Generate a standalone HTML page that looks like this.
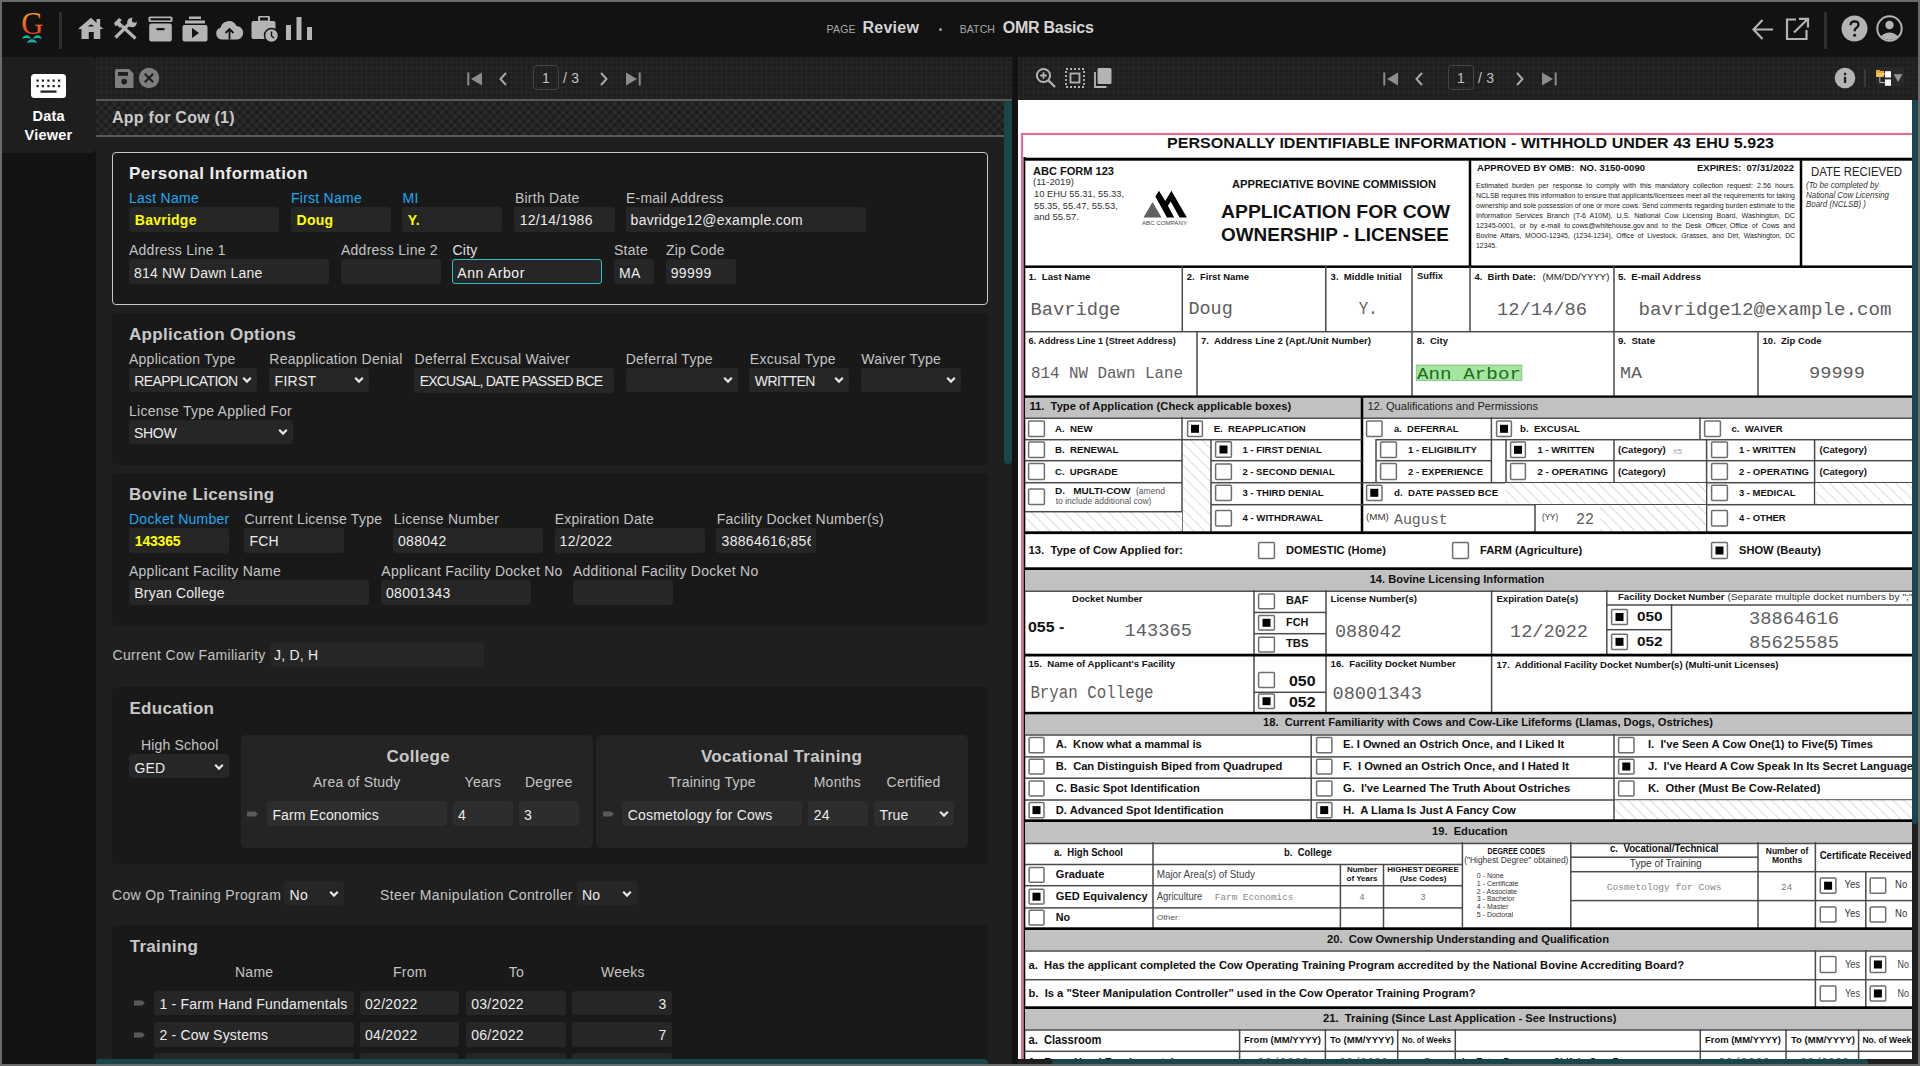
<!DOCTYPE html>
<html><head><meta charset="utf-8">
<style>
*{box-sizing:border-box;margin:0;padding:0}
html,body{width:1920px;height:1066px;overflow:hidden;background:#6b6b6b;font-family:"Liberation Sans",sans-serif}
.a{position:absolute}
.t{position:absolute;white-space:nowrap;letter-spacing:0.25px}
svg text{white-space:pre}
.grid{background-color:#1f1f1f;background-image:linear-gradient(rgba(255,255,255,0.028) 1px,transparent 1px),linear-gradient(90deg,rgba(255,255,255,0.028) 1px,transparent 1px);background-size:5px 5px}
.chk{background-color:#2c2c2c;background-image:repeating-linear-gradient(45deg,rgba(0,0,0,0.2) 0 3px,transparent 3px 6.1px),repeating-linear-gradient(-45deg,rgba(0,0,0,0.2) 0 3px,transparent 3px 6.1px)}
</style></head>
<body>

<div class="a" style="left:2px;top:2px;width:1916px;height:1062px;background:#121212;"></div>
<svg class="a" style="left:18px;top:10px" width="32" height="36" viewBox="0 0 32 36">
<defs><linearGradient id="lg" x1="0" y1="0" x2="0" y2="1"><stop offset="0.15" stop-color="#f5a01c"/><stop offset="0.95" stop-color="#e82a1e"/></linearGradient></defs>
<text x="14.3" y="24" text-anchor="middle" font-family="Liberation Serif" font-size="30.5" fill="url(#lg)">G</text>
<path d="M4 28.7 C5.5 24 11.5 24 13 28.7 Q8.5 27.4 4 28.7Z M15 28.7 C16.5 24 22.5 24 24 28.7 Q19.5 27.4 15 28.7Z M9 33 C10.6 28 17.4 28 19 33 Q14 31.6 9 33Z" fill="#12b0a6"/>
</svg>
<div class="a" style="left:59px;top:12px;width:3px;height:37px;background:#2e2e2e;"></div>
<svg class="a" style="left:78px;top:17px" width="26" height="23" viewBox="0 0 26 23"><path d="M13 0.8 L18.5 5.9 V1.9 H22.2 V9.4 L25.75 12 H22.3 V22 H15.75 V14.9 H10.75 V22 H3.5 V12 H0 Z" fill="#b4b4b4"/><path d="M10 9.6 Q13 5.6 16 9.6Z" fill="#121212"/></svg>
<svg class="a" style="left:113px;top:17px" width="25" height="23" viewBox="0 0 25 23"><path d="M2.5 20.5 L16 7" stroke="#b4b4b4" stroke-width="3.2"/><path d="M9 9 L22.5 21.5" stroke="#b4b4b4" stroke-width="3.2"/><circle cx="19" cy="5.5" r="4.8" fill="#b4b4b4"/><circle cx="21.5" cy="3" r="2.6" fill="#121212"/><path d="M1 6 L6 1 L9 3 L7 5 L10 8 L7 11 L4 8 L2.5 9.5Z" fill="#b4b4b4"/></svg>
<svg class="a" style="left:148px;top:16px" width="25" height="26" viewBox="0 0 25 26"><rect x="0.5" y="0.5" width="24" height="5.5" rx="1.5" fill="#b4b4b4"/><rect x="2.5" y="2.2" width="20" height="2.2" fill="#121212"/><rect x="1.2" y="7.5" width="22.6" height="18" rx="2" fill="#b4b4b4"/><rect x="8.5" y="12" width="8" height="2.2" fill="#121212"/></svg>
<svg class="a" style="left:182px;top:16px" width="26" height="26" viewBox="0 0 26 26"><rect x="7" y="0.5" width="12" height="2.5" fill="#b4b4b4"/><rect x="3" y="4.5" width="20" height="3" fill="#b4b4b4"/><rect x="0.5" y="9" width="25" height="16.5" rx="2" fill="#b4b4b4"/><path d="M10 12 L17 17 L10 22Z" fill="#121212"/></svg>
<svg class="a" style="left:215px;top:19px" width="29" height="21" viewBox="0 0 29 21"><path d="M6.5 20.5 A6 6 0 0 1 5.5 8.8 A8.5 8.5 0 0 1 21.5 7 A6.8 6.8 0 0 1 22.5 20.5Z" fill="#b4b4b4"/><path d="M14.5 20.5 V10.5 M10.5 14 L14.5 10 L18.5 14" stroke="#121212" stroke-width="1.8" fill="none"/></svg>
<svg class="a" style="left:251px;top:16px" width="28" height="27" viewBox="0 0 28 27"><rect x="8" y="0.5" width="10" height="5" rx="1.5" fill="none" stroke="#b4b4b4" stroke-width="2"/><rect x="0.5" y="5" width="24" height="18" rx="2" fill="#b4b4b4"/><circle cx="20.5" cy="19.5" r="7" fill="#b4b4b4" stroke="#121212" stroke-width="1.5"/><path d="M20.5 15.5 V20 L23 22" stroke="#121212" stroke-width="1.4" fill="none"/></svg>
<svg class="a" style="left:286px;top:17px" width="26" height="23" viewBox="0 0 26 23"><rect x="0" y="8" width="5" height="15" fill="#b4b4b4"/><rect x="10.5" y="0" width="5" height="23" fill="#b4b4b4"/><rect x="21" y="10" width="5" height="13" fill="#b4b4b4"/></svg>
<div class="t" style="left:826.5px;top:24.3px;font-size:10.5px;line-height:10.5px;color:#a8a8a8;letter-spacing:0.2px;">PAGE</div>
<div class="t" style="left:862.5px;top:19.7px;font-size:16px;line-height:16px;color:#d4d4d4;font-weight:bold;">Review</div>
<div class="a" style="left:939px;top:28px;width:3px;height:3px;background:#a0a0a0;border-radius:50%;"></div>
<div class="t" style="left:959.7px;top:24.3px;font-size:10.5px;line-height:10.5px;color:#a8a8a8;letter-spacing:0.1px;">BATCH</div>
<div class="t" style="left:1002.7px;top:19.7px;font-size:16px;line-height:16px;color:#d4d4d4;font-weight:bold;letter-spacing:-0.25px;">OMR Basics</div>
<svg class="a" style="left:1751px;top:18px" width="24" height="23" viewBox="0 0 24 23"><path d="M22 11.5 H3 M11.5 2 L2.5 11.5 L11.5 21" stroke="#b4b4b4" stroke-width="2.2" fill="none"/></svg>
<svg class="a" style="left:1785px;top:17px" width="25" height="24" viewBox="0 0 25 24"><path d="M11 2.5 H2 V22 H21.5 V13" stroke="#b4b4b4" stroke-width="2.2" fill="none"/><path d="M14 1.8 H23 V10.5 M23 1.8 L9 15.5" stroke="#b4b4b4" stroke-width="2.2" fill="none"/></svg>
<div class="a" style="left:1824px;top:12px;width:3px;height:37px;background:#2e2e2e;"></div>
<svg class="a" style="left:1841px;top:15px" width="27" height="27" viewBox="0 0 27 27"><circle cx="13.5" cy="13.5" r="13" fill="#b4b4b4"/><path d="M9.5 10.2 Q9.6 6.3 13.6 6.3 Q17.6 6.4 17.5 9.8 Q17.4 12 15 13.2 Q13.6 14 13.6 16.2" stroke="#121212" stroke-width="2.3" fill="none"/><circle cx="13.6" cy="20.2" r="1.5" fill="#121212"/></svg>
<svg class="a" style="left:1876px;top:15px" width="27" height="27" viewBox="0 0 27 27"><circle cx="13.5" cy="13.5" r="12.2" fill="none" stroke="#b4b4b4" stroke-width="2"/><circle cx="13.5" cy="10" r="4.2" fill="#b4b4b4"/><path d="M4.5 21.5 Q13.5 13.5 22.5 21.5 Q13.5 28.5 4.5 21.5Z" fill="#b4b4b4"/></svg>
<div class="a" style="left:2px;top:57px;width:94px;height:96px;background:#1e1e1e;border-radius:0 5px 5px 0;"></div>
<svg class="a" style="left:31px;top:74px" width="35" height="24" viewBox="0 0 35 24"><rect x="0" y="0" width="35" height="24" rx="3.5" fill="#ffffff"/>
<g fill="#1e1e1e"><rect x="5.5" y="5.5" width="2.2" height="2.2"/><rect x="10.8" y="5.5" width="2.2" height="2.2"/><rect x="16.3" y="5.5" width="2.2" height="2.2"/><rect x="21.6" y="5.5" width="2.2" height="2.2"/><rect x="27" y="5.5" width="2.2" height="2.2"/>
<rect x="5.5" y="11" width="2.2" height="2.2"/><rect x="10.8" y="11" width="2.2" height="2.2"/><rect x="16.3" y="11" width="2.2" height="2.2"/><rect x="21.6" y="11" width="2.2" height="2.2"/><rect x="27" y="11" width="2.2" height="2.2"/>
<rect x="9.5" y="16.5" width="16" height="2.2"/></g></svg>
<div class="t" style="left:32.5px;top:109.2px;font-size:14.5px;line-height:14.5px;color:#ffffff;font-weight:bold;">Data</div>
<div class="t" style="left:24.5px;top:128.2px;font-size:14.5px;line-height:14.5px;color:#ffffff;font-weight:bold;">Viewer</div>
<div class="a" style="left:96px;top:57px;width:916px;height:1007px;background:#1f1f1f;"></div>
<div class="a grid" style="left:96px;top:57px;width:916px;height:43px"></div>
<svg class="a" style="left:115px;top:69px" width="19" height="19" viewBox="0 0 19 19"><path d="M0 1.5 Q0 0 1.5 0 H14 L18.5 4.5 V17.5 Q18.5 19 17 19 H1.5 Q0 19 0 17.5Z" fill="#7e7e7e"/><rect x="3" y="3" width="10" height="3.8" fill="#1f1f1f"/><circle cx="9.2" cy="12.6" r="2.9" fill="#1f1f1f"/></svg>
<svg class="a" style="left:138px;top:67px" width="22" height="22" viewBox="0 0 22 22"><circle cx="11" cy="11" r="10.2" fill="#7e7e7e"/><path d="M6.8 6.8 L15.2 15.2 M15.2 6.8 L6.8 15.2" stroke="#1f1f1f" stroke-width="2.2"/></svg>
<svg class="a" style="left:467px;top:72px" width="16" height="14" viewBox="0 0 16 14"><rect x="0.3" y="0.5" width="2" height="13" fill="#8c8c8c"/><path d="M15 0.5 V13.5 L4 7Z" fill="#8c8c8c"/></svg>
<svg class="a" style="left:498px;top:72px" width="10" height="14" viewBox="0 0 10 14"><path d="M8 1 L2.5 7 L8 13" stroke="#a8a8a8" stroke-width="2" fill="none"/></svg>
<div class="a" style="left:533px;top:65px;width:26px;height:25px;border:1px solid #444;border-radius:4px"></div>
<div class="t" style="left:542.0px;top:70.9px;font-size:14px;line-height:14px;color:#c0c0c0;">1</div>
<div class="t" style="left:563.0px;top:70.9px;font-size:14px;line-height:14px;color:#c0c0c0;">/ 3</div>
<svg class="a" style="left:599px;top:72px" width="10" height="14" viewBox="0 0 10 14"><path d="M2 1 L7.5 7 L2 13" stroke="#a8a8a8" stroke-width="2" fill="none"/></svg>
<svg class="a" style="left:625px;top:72px" width="16" height="14" viewBox="0 0 16 14"><path d="M1 0.5 V13.5 L12 7Z" fill="#8c8c8c"/><rect x="13.7" y="0.5" width="2" height="13" fill="#8c8c8c"/></svg>
<div class="a chk" style="left:96px;top:99px;width:908px;height:38px;border-top:2px solid #595959;border-bottom:2px solid #595959"></div>
<div class="t" style="left:112.0px;top:110.0px;font-size:16px;line-height:16px;color:#c8c8c8;font-weight:bold;">App for Cow (1)</div>
<div class="a" style="left:1004px;top:100px;width:8px;height:364px;background:#17474b;border-radius:4px;"></div>
<div class="a" style="left:96px;top:99px;width:916px;height:2px;background:#595959;"></div>
<div class="a" style="left:96px;top:1059px;width:892px;height:5px;background:#17474b;border-radius:4px 4px 0 0;"></div>
<div class="a" style="left:112px;top:152px;width:876px;height:153px;background:#191919;border:1.5px solid #c8c8c8;border-radius:4px"></div>
<div class="t" style="left:129.0px;top:164.9px;font-size:17px;line-height:17px;color:#ececec;font-weight:bold;letter-spacing:0.45px;">Personal Information</div>
<div class="t" style="left:129.0px;top:191.4px;font-size:14px;line-height:14px;color:#1fa8f0;">Last Name</div>
<div class="t" style="left:291.0px;top:191.4px;font-size:14px;line-height:14px;color:#1fa8f0;">First Name</div>
<div class="t" style="left:402.6px;top:191.4px;font-size:14px;line-height:14px;color:#1fa8f0;">MI</div>
<div class="t" style="left:514.9px;top:191.4px;font-size:14px;line-height:14px;color:#c4c4c4;">Birth Date</div>
<div class="t" style="left:625.9px;top:191.4px;font-size:14px;line-height:14px;color:#c4c4c4;">E-mail Address</div>
<div class="a" style="left:129px;top:207px;width:150px;height:25px;background:#262626;border-radius:3px;"></div>
<div class="a" style="left:291px;top:207px;width:100px;height:25px;background:#262626;border-radius:3px;"></div>
<div class="a" style="left:402px;top:207px;width:100px;height:25px;background:#262626;border-radius:3px;"></div>
<div class="a" style="left:514px;top:207px;width:101px;height:25px;background:#262626;border-radius:3px;"></div>
<div class="a" style="left:626px;top:207px;width:240px;height:25px;background:#262626;border-radius:3px;"></div>
<div class="t" style="left:134.8px;top:213.4px;font-size:14px;line-height:14px;color:#ffff00;font-weight:bold;">Bavridge</div>
<div class="t" style="left:296.6px;top:213.4px;font-size:14px;line-height:14px;color:#ffff00;font-weight:bold;">Doug</div>
<div class="t" style="left:407.7px;top:213.4px;font-size:14px;line-height:14px;color:#ffff00;font-weight:bold;">Y.</div>
<div class="t" style="left:519.7px;top:213.4px;font-size:14px;line-height:14px;color:#ececec;letter-spacing:0.3px;">12/14/1986</div>
<div class="t" style="left:630.6px;top:213.4px;font-size:14px;line-height:14px;color:#ececec;letter-spacing:0.25px;">bavridge12@example.com</div>
<div class="t" style="left:129.0px;top:243.4px;font-size:14px;line-height:14px;color:#c4c4c4;">Address Line 1</div>
<div class="t" style="left:341.0px;top:243.4px;font-size:14px;line-height:14px;color:#c4c4c4;">Address Line 2</div>
<div class="t" style="left:452.5px;top:243.4px;font-size:14px;line-height:14px;color:#e0e0e0;">City</div>
<div class="t" style="left:614.0px;top:243.4px;font-size:14px;line-height:14px;color:#c4c4c4;">State</div>
<div class="t" style="left:665.9px;top:243.4px;font-size:14px;line-height:14px;color:#c4c4c4;">Zip Code</div>
<div class="a" style="left:129px;top:259px;width:200px;height:25px;background:#262626;border-radius:3px;"></div>
<div class="a" style="left:341px;top:259px;width:100px;height:25px;background:#262626;border-radius:3px;"></div>
<div class="a" style="left:452px;top:259px;width:150px;height:25px;background:#262626;border:1.6px solid #2bc0c8;border-radius:3px"></div>
<div class="a" style="left:614px;top:259px;width:40px;height:25px;background:#262626;border-radius:3px;"></div>
<div class="a" style="left:666px;top:259px;width:70px;height:25px;background:#262626;border-radius:3px;"></div>
<div class="t" style="left:134.0px;top:265.5px;font-size:14px;line-height:14px;color:#ececec;letter-spacing:0.2px;">814 NW Dawn Lane</div>
<div class="t" style="left:457.3px;top:265.5px;font-size:14px;line-height:14px;color:#f4f4f4;letter-spacing:0.6px;">Ann Arbor</div>
<div class="t" style="left:619.0px;top:265.5px;font-size:14px;line-height:14px;color:#ececec;">MA</div>
<div class="t" style="left:670.7px;top:265.5px;font-size:14px;line-height:14px;color:#ececec;letter-spacing:0.4px;">99999</div>
<div class="a" style="left:112px;top:313px;width:876px;height:152px;background:#191919;border-radius:5px;"></div>
<div class="t" style="left:129.0px;top:325.6px;font-size:17px;line-height:17px;color:#c8c8c8;font-weight:bold;letter-spacing:0.3px;">Application Options</div>
<div class="t" style="left:129.0px;top:352.1px;font-size:14px;line-height:14px;color:#c4c4c4;">Application Type</div>
<div class="t" style="left:269.3px;top:352.1px;font-size:14px;line-height:14px;color:#c4c4c4;">Reapplication Denial</div>
<div class="t" style="left:414.6px;top:352.1px;font-size:14px;line-height:14px;color:#c4c4c4;">Deferral Excusal Waiver</div>
<div class="t" style="left:625.7px;top:352.1px;font-size:14px;line-height:14px;color:#c4c4c4;">Deferral Type</div>
<div class="t" style="left:749.8px;top:352.1px;font-size:14px;line-height:14px;color:#c4c4c4;">Excusal Type</div>
<div class="t" style="left:861.2px;top:352.1px;font-size:14px;line-height:14px;color:#c4c4c4;">Waiver Type</div>
<div class="a" style="left:129px;top:368px;width:128px;height:24px;background:#262626;border-radius:3px;"></div>
<div class="a" style="left:269px;top:368px;width:100px;height:24px;background:#262626;border-radius:3px;"></div>
<div class="a" style="left:414px;top:368px;width:200px;height:25px;background:#262626;border-radius:3px;"></div>
<div class="a" style="left:626px;top:368px;width:112px;height:24px;background:#262626;border-radius:3px;"></div>
<div class="a" style="left:749px;top:368px;width:100px;height:24px;background:#262626;border-radius:3px;"></div>
<div class="a" style="left:861px;top:368px;width:100px;height:24px;background:#262626;border-radius:3px;"></div>
<div class="t" style="left:134.3px;top:374.4px;font-size:14px;line-height:14px;color:#ececec;letter-spacing:-0.6px;">REAPPLICATION</div>
<div class="t" style="left:274.6px;top:374.4px;font-size:14px;line-height:14px;color:#ececec;">FIRST</div>
<div class="t" style="left:419.7px;top:374.4px;font-size:14px;line-height:14px;color:#ececec;letter-spacing:-0.8px;">EXCUSAL, DATE PASSED BCE</div>
<div class="t" style="left:754.7px;top:374.4px;font-size:14px;line-height:14px;color:#ececec;letter-spacing:-0.5px;">WRITTEN</div>
<svg class="a" style="left:242px;top:376px" width="10" height="8"><path d="M1.2 1.8 L5 5.6 L8.8 1.8" stroke="#e6e6e6" stroke-width="2.2" fill="none"/></svg>
<svg class="a" style="left:354px;top:376px" width="10" height="8"><path d="M1.2 1.8 L5 5.6 L8.8 1.8" stroke="#e6e6e6" stroke-width="2.2" fill="none"/></svg>
<svg class="a" style="left:723px;top:376px" width="10" height="8"><path d="M1.2 1.8 L5 5.6 L8.8 1.8" stroke="#e6e6e6" stroke-width="2.2" fill="none"/></svg>
<svg class="a" style="left:833.5px;top:376px" width="10" height="8"><path d="M1.2 1.8 L5 5.6 L8.8 1.8" stroke="#e6e6e6" stroke-width="2.2" fill="none"/></svg>
<svg class="a" style="left:945.7px;top:376px" width="10" height="8"><path d="M1.2 1.8 L5 5.6 L8.8 1.8" stroke="#e6e6e6" stroke-width="2.2" fill="none"/></svg>
<div class="t" style="left:129.0px;top:403.6px;font-size:14px;line-height:14px;color:#c4c4c4;">License Type Applied For</div>
<div class="a" style="left:129px;top:420px;width:164px;height:24px;background:#262626;border-radius:3px;"></div>
<div class="t" style="left:134.0px;top:426.4px;font-size:14px;line-height:14px;color:#ececec;letter-spacing:-0.3px;">SHOW</div>
<svg class="a" style="left:278px;top:428px" width="10" height="8"><path d="M1.2 1.8 L5 5.6 L8.8 1.8" stroke="#e6e6e6" stroke-width="2.2" fill="none"/></svg>
<div class="a" style="left:112px;top:473px;width:876px;height:153px;background:#191919;border-radius:5px;"></div>
<div class="t" style="left:129.0px;top:485.6px;font-size:17px;line-height:17px;color:#c8c8c8;font-weight:bold;letter-spacing:0.3px;">Bovine Licensing</div>
<div class="t" style="left:129.0px;top:512.1px;font-size:14px;line-height:14px;color:#1fa8f0;">Docket Number</div>
<div class="t" style="left:244.4px;top:512.1px;font-size:14px;line-height:14px;color:#c4c4c4;">Current License Type</div>
<div class="t" style="left:393.8px;top:512.1px;font-size:14px;line-height:14px;color:#c4c4c4;">License Number</div>
<div class="t" style="left:554.7px;top:512.1px;font-size:14px;line-height:14px;color:#c4c4c4;">Expiration Date</div>
<div class="t" style="left:716.7px;top:512.1px;font-size:14px;line-height:14px;color:#c4c4c4;">Facility Docket Number(s)</div>
<div class="a" style="left:129px;top:528px;width:100px;height:25px;background:#262626;border-radius:3px;"></div>
<div class="a" style="left:244px;top:528px;width:100px;height:25px;background:#262626;border-radius:3px;"></div>
<div class="a" style="left:393px;top:528px;width:150px;height:25px;background:#262626;border-radius:3px;"></div>
<div class="a" style="left:555px;top:528px;width:150px;height:25px;background:#262626;border-radius:3px;"></div>
<div class="a" style="left:716px;top:528px;width:100px;height:25px;background:#262626;border-radius:3px;"></div>
<div class="t" style="left:134.8px;top:534.4px;font-size:14px;line-height:14px;color:#ffff00;font-weight:bold;letter-spacing:-0.2px;">143365</div>
<div class="t" style="left:249.4px;top:534.4px;font-size:14px;line-height:14px;color:#ececec;">FCH</div>
<div class="t" style="left:398.0px;top:534.4px;font-size:14px;line-height:14px;color:#ececec;letter-spacing:0.3px;">088042</div>
<div class="t" style="left:559.6px;top:534.4px;font-size:14px;line-height:14px;color:#ececec;letter-spacing:0.3px;">12/2022</div>
<div class="t" style="left:721.6px;top:534.4px;width:89.5px;overflow:hidden;font-size:14px;line-height:14px;color:#ececec;letter-spacing:0.3px">38864616;856</div>
<div class="t" style="left:129.0px;top:563.6px;font-size:14px;line-height:14px;color:#c4c4c4;">Applicant Facility Name</div>
<div class="t" style="left:381.3px;top:563.6px;font-size:14px;line-height:14px;color:#c4c4c4;">Applicant Facility Docket No</div>
<div class="t" style="left:573.0px;top:563.6px;font-size:14px;line-height:14px;color:#c4c4c4;">Additional Facility Docket No</div>
<div class="a" style="left:129px;top:580px;width:240px;height:25px;background:#262626;border-radius:3px;"></div>
<div class="a" style="left:381px;top:580px;width:150px;height:25px;background:#262626;border-radius:3px;"></div>
<div class="a" style="left:573px;top:580px;width:100px;height:25px;background:#262626;border-radius:3px;"></div>
<div class="t" style="left:134.3px;top:586.4px;font-size:14px;line-height:14px;color:#ececec;letter-spacing:0.2px;">Bryan College</div>
<div class="t" style="left:386.0px;top:586.4px;font-size:14px;line-height:14px;color:#ececec;letter-spacing:0.3px;">08001343</div>
<div class="t" style="left:112.5px;top:647.8px;font-size:14px;line-height:14px;color:#c4c4c4;letter-spacing:0.3px;">Current Cow Familiarity</div>
<div class="a" style="left:270px;top:642px;width:214px;height:25px;background:#262626;border-radius:3px;"></div>
<div class="t" style="left:273.9px;top:647.8px;font-size:14px;line-height:14px;color:#ececec;">J, D, H</div>
<div class="a" style="left:112px;top:687px;width:876px;height:177px;background:#191919;border-radius:5px;"></div>
<div class="t" style="left:129.4px;top:699.5px;font-size:17px;line-height:17px;color:#c8c8c8;font-weight:bold;letter-spacing:0.3px;">Education</div>
<div class="t" style="left:140.9px;top:738.4px;font-size:14px;line-height:14px;color:#c4c4c4;letter-spacing:0.2px;">High School</div>
<div class="a" style="left:129px;top:754px;width:100px;height:24px;background:#262626;border-radius:3px;"></div>
<div class="t" style="left:134.4px;top:760.5px;font-size:14px;line-height:14px;color:#ececec;">GED</div>
<svg class="a" style="left:214px;top:762.5px" width="10" height="8"><path d="M1.2 1.8 L5 5.6 L8.8 1.8" stroke="#e6e6e6" stroke-width="2.2" fill="none"/></svg>
<div class="a" style="left:241px;top:735px;width:352px;height:113px;background:#242424;border-radius:5px;"></div>
<div class="a" style="left:596px;top:735px;width:372px;height:113px;background:#242424;border-radius:5px;"></div>
<div class="t" style="left:386.5px;top:747.6px;font-size:17px;line-height:17px;color:#c8c8c8;font-weight:bold;letter-spacing:0.3px;">College</div>
<div class="t" style="left:313.0px;top:775.4px;font-size:14px;line-height:14px;color:#c4c4c4;letter-spacing:0.2px;">Area of Study</div>
<div class="t" style="left:464.6px;top:775.4px;font-size:14px;line-height:14px;color:#c4c4c4;">Years</div>
<div class="t" style="left:525.0px;top:775.4px;font-size:14px;line-height:14px;color:#c4c4c4;">Degree</div>
<svg class="a" style="left:247px;top:810.5px" width="12" height="6"><path d="M0 0.5 H8 L11 3 L8 5.5 H0 Z" fill="#5a5a5a"/></svg>
<div class="a" style="left:267px;top:801px;width:180px;height:25px;background:#2d2d2d;border-radius:3px;"></div>
<div class="a" style="left:453px;top:801px;width:60px;height:25px;background:#2d2d2d;border-radius:3px;"></div>
<div class="a" style="left:519px;top:801px;width:60px;height:25px;background:#2d2d2d;border-radius:3px;"></div>
<div class="t" style="left:272.4px;top:807.9px;font-size:14px;line-height:14px;color:#ececec;letter-spacing:0.1px;">Farm Economics</div>
<div class="t" style="left:458.0px;top:807.9px;font-size:14px;line-height:14px;color:#ececec;">4</div>
<div class="t" style="left:524.0px;top:807.9px;font-size:14px;line-height:14px;color:#ececec;">3</div>
<div class="t" style="left:700.9px;top:747.8px;font-size:17px;line-height:17px;color:#c8c8c8;font-weight:bold;letter-spacing:0.3px;">Vocational Training</div>
<div class="t" style="left:668.5px;top:775.1px;font-size:14px;line-height:14px;color:#c4c4c4;">Training Type</div>
<div class="t" style="left:813.7px;top:775.1px;font-size:14px;line-height:14px;color:#c4c4c4;">Months</div>
<div class="t" style="left:886.6px;top:775.1px;font-size:14px;line-height:14px;color:#c4c4c4;letter-spacing:0.2px;">Certified</div>
<svg class="a" style="left:603px;top:810.5px" width="12" height="6"><path d="M0 0.5 H8 L11 3 L8 5.5 H0 Z" fill="#5a5a5a"/></svg>
<div class="a" style="left:622px;top:801px;width:180px;height:25px;background:#2d2d2d;border-radius:3px;"></div>
<div class="a" style="left:808px;top:801px;width:60px;height:25px;background:#2d2d2d;border-radius:3px;"></div>
<div class="a" style="left:874px;top:801px;width:80px;height:25px;background:#2d2d2d;border-radius:3px;"></div>
<div class="t" style="left:627.7px;top:807.7px;font-size:14px;line-height:14px;color:#ececec;letter-spacing:0.2px;">Cosmetology for Cows</div>
<div class="t" style="left:813.7px;top:807.7px;font-size:14px;line-height:14px;color:#ececec;">24</div>
<div class="t" style="left:879.4px;top:807.7px;font-size:14px;line-height:14px;color:#ececec;">True</div>
<svg class="a" style="left:939px;top:809.5px" width="10" height="8"><path d="M1.2 1.8 L5 5.6 L8.8 1.8" stroke="#e6e6e6" stroke-width="2.2" fill="none"/></svg>
<div class="t" style="left:112.0px;top:888.1px;font-size:14px;line-height:14px;color:#c4c4c4;letter-spacing:0.32px;">Cow Op Training Program</div>
<div class="a" style="left:284px;top:881px;width:60px;height:24px;background:#262626;border-radius:3px;"></div>
<div class="t" style="left:289.6px;top:888.1px;font-size:14px;line-height:14px;color:#ececec;">No</div>
<svg class="a" style="left:328.5px;top:889.5px" width="10" height="8"><path d="M1.2 1.8 L5 5.6 L8.8 1.8" stroke="#e6e6e6" stroke-width="2.2" fill="none"/></svg>
<div class="t" style="left:380.0px;top:888.1px;font-size:14px;line-height:14px;color:#c4c4c4;letter-spacing:0.4px;">Steer Manipulation Controller</div>
<div class="a" style="left:577px;top:881px;width:60px;height:24px;background:#262626;border-radius:3px;"></div>
<div class="t" style="left:582.0px;top:888.1px;font-size:14px;line-height:14px;color:#ececec;">No</div>
<svg class="a" style="left:622px;top:889.5px" width="10" height="8"><path d="M1.2 1.8 L5 5.6 L8.8 1.8" stroke="#e6e6e6" stroke-width="2.2" fill="none"/></svg>
<div class="a" style="left:112px;top:925px;width:876px;height:145px;background:#191919;border-radius:5px;"></div>
<div class="t" style="left:129.7px;top:937.5px;font-size:17px;line-height:17px;color:#c8c8c8;font-weight:bold;letter-spacing:0.3px;">Training</div>
<div class="t" style="left:235.0px;top:965.3px;font-size:14px;line-height:14px;color:#c4c4c4;">Name</div>
<div class="t" style="left:393.0px;top:965.3px;font-size:14px;line-height:14px;color:#c4c4c4;">From</div>
<div class="t" style="left:508.8px;top:965.3px;font-size:14px;line-height:14px;color:#c4c4c4;">To</div>
<div class="t" style="left:601.0px;top:965.3px;font-size:14px;line-height:14px;color:#c4c4c4;">Weeks</div>
<svg class="a" style="left:134px;top:1000.0px" width="12" height="6"><path d="M0 0.5 H8 L11 3 L8 5.5 H0 Z" fill="#5a5a5a"/></svg>
<div class="a" style="left:154px;top:991px;width:200px;height:24px;background:#262626;border-radius:3px;"></div>
<div class="a" style="left:360px;top:991px;width:99px;height:24px;background:#262626;border-radius:3px;"></div>
<div class="a" style="left:466px;top:991px;width:100px;height:24px;background:#262626;border-radius:3px;"></div>
<div class="a" style="left:572px;top:991px;width:100px;height:24px;background:#262626;border-radius:3px;"></div>
<div class="t" style="left:159.4px;top:997.1px;font-size:14px;line-height:14px;color:#ececec;letter-spacing:0.2px;">1 - Farm Hand Fundamentals</div>
<div class="t" style="left:365.0px;top:997.1px;font-size:14px;line-height:14px;color:#ececec;letter-spacing:0.3px;">02/2022</div>
<div class="t" style="left:471.2px;top:997.1px;font-size:14px;line-height:14px;color:#ececec;letter-spacing:0.3px;">03/2022</div>
<div class="t" style="left:658.5px;top:997.1px;font-size:14px;line-height:14px;color:#ececec;">3</div>
<svg class="a" style="left:134px;top:1031.5px" width="12" height="6"><path d="M0 0.5 H8 L11 3 L8 5.5 H0 Z" fill="#5a5a5a"/></svg>
<div class="a" style="left:154px;top:1022px;width:200px;height:25px;background:#262626;border-radius:3px;"></div>
<div class="a" style="left:360px;top:1022px;width:99px;height:25px;background:#262626;border-radius:3px;"></div>
<div class="a" style="left:466px;top:1022px;width:100px;height:25px;background:#262626;border-radius:3px;"></div>
<div class="a" style="left:572px;top:1022px;width:100px;height:25px;background:#262626;border-radius:3px;"></div>
<div class="t" style="left:159.4px;top:1028.4px;font-size:14px;line-height:14px;color:#ececec;letter-spacing:0.2px;">2 - Cow Systems</div>
<div class="t" style="left:365.0px;top:1028.4px;font-size:14px;line-height:14px;color:#ececec;letter-spacing:0.3px;">04/2022</div>
<div class="t" style="left:471.2px;top:1028.4px;font-size:14px;line-height:14px;color:#ececec;letter-spacing:0.3px;">06/2022</div>
<div class="t" style="left:658.5px;top:1028.4px;font-size:14px;line-height:14px;color:#ececec;">7</div>
<svg class="a" style="left:134px;top:1062.5px" width="12" height="6"><path d="M0 0.5 H8 L11 3 L8 5.5 H0 Z" fill="#5a5a5a"/></svg>
<div class="a" style="left:154px;top:1053px;width:200px;height:25px;background:#262626;border-radius:3px;"></div>
<div class="a" style="left:360px;top:1053px;width:99px;height:25px;background:#262626;border-radius:3px;"></div>
<div class="a" style="left:466px;top:1053px;width:100px;height:25px;background:#262626;border-radius:3px;"></div>
<div class="a" style="left:572px;top:1053px;width:100px;height:25px;background:#262626;border-radius:3px;"></div>
<div class="a" style="left:96px;top:1059px;width:892px;height:5px;background:#17474b;border-radius:4px 4px 0 0;"></div>
<div class="a" style="left:988px;top:1059px;width:24px;height:5px;background:#1f1f1f;"></div>
<div class="a" style="left:96px;top:1064px;width:916px;height:2px;background:#6b6b6b;"></div>
<div class="a" style="left:1012px;top:57px;width:6px;height:1007px;background:#121212;"></div>
<div class="a grid" style="left:1018px;top:57px;width:900px;height:43px"></div>
<svg class="a" style="left:1035px;top:67px" width="22" height="22" viewBox="0 0 22 22"><circle cx="8.5" cy="8.5" r="6.6" fill="none" stroke="#b4b4b4" stroke-width="2"/><path d="M8.5 5.2 V11.8 M5.2 8.5 H11.8" stroke="#b4b4b4" stroke-width="1.8"/><path d="M13.3 13.3 L20 20" stroke="#b4b4b4" stroke-width="2.3"/></svg>
<svg class="a" style="left:1065px;top:68px" width="20" height="20" viewBox="0 0 20 20"><rect x="1" y="1" width="18" height="18" fill="none" stroke="#b4b4b4" stroke-width="1.8" stroke-dasharray="2 2"/><rect x="5.5" y="5.5" width="9" height="9" fill="none" stroke="#b4b4b4" stroke-width="1.8"/></svg>
<svg class="a" style="left:1093px;top:67px" width="20" height="22" viewBox="0 0 20 22"><path d="M2 5 V20 H13.5" stroke="#b4b4b4" stroke-width="1.8" fill="none"/><rect x="4.5" y="1" width="14" height="16" rx="1.5" fill="#b4b4b4"/></svg>
<svg class="a" style="left:1383px;top:72px" width="16" height="14" viewBox="0 0 16 14"><rect x="0.3" y="0.5" width="2" height="13" fill="#8c8c8c"/><path d="M15 0.5 V13.5 L4 7Z" fill="#8c8c8c"/></svg>
<svg class="a" style="left:1414px;top:72px" width="10" height="14" viewBox="0 0 10 14"><path d="M8 1 L2.5 7 L8 13" stroke="#a8a8a8" stroke-width="2" fill="none"/></svg>
<div class="a" style="left:1448px;top:65px;width:26px;height:25px;border:1px solid #444;border-radius:4px"></div>
<div class="t" style="left:1457.0px;top:70.9px;font-size:14px;line-height:14px;color:#c0c0c0;">1</div>
<div class="t" style="left:1478.0px;top:70.9px;font-size:14px;line-height:14px;color:#c0c0c0;">/ 3</div>
<svg class="a" style="left:1515px;top:72px" width="10" height="14" viewBox="0 0 10 14"><path d="M2 1 L7.5 7 L2 13" stroke="#a8a8a8" stroke-width="2" fill="none"/></svg>
<svg class="a" style="left:1541px;top:72px" width="16" height="14" viewBox="0 0 16 14"><path d="M1 0.5 V13.5 L12 7Z" fill="#8c8c8c"/><rect x="13.7" y="0.5" width="2" height="13" fill="#8c8c8c"/></svg>
<svg class="a" style="left:1834px;top:67px" width="22" height="22" viewBox="0 0 22 22"><circle cx="11" cy="11" r="10.3" fill="#b4b4b4"/><rect x="9.9" y="9.8" width="2.3" height="6.2" fill="#1f1f1f"/><rect x="9.9" y="5.8" width="2.3" height="2.4" fill="#1f1f1f"/></svg>
<div class="a" style="left:1864px;top:69px;width:2px;height:18px;background:#3a3a3a;"></div>
<div class="a" style="left:1876px;top:67px;width:28px;height:19px;background:#2a2a2a;border-radius:4px;"></div>
<svg class="a" style="left:1876px;top:67px" width="28" height="20" viewBox="0 0 28 20"><path d="M0 3 H3.5 L4.5 4 H8 V9.8 H0Z" fill="#f0a830"/><path d="M1.5 6 H8.5 L7.5 9.8 H0Z" fill="#f8c860"/><path d="M3.8 10 V15.5 H9 M8 7 H9" stroke="#c8c8c8" stroke-width="0.9" fill="none"/><rect x="9" y="4.2" width="6" height="6.3" fill="#fff"/><rect x="9" y="12.4" width="6" height="6.4" fill="#fff"/><path d="M17.8 7.2 H26.4 L22.1 15Z" fill="#999"/></svg>
<svg class="a" style="left:1018px;top:100px" width="894" height="959" viewBox="1018 100 894 959" font-family="Liberation Sans" fill="#111" xml:space="preserve"><defs><pattern id="hat" patternUnits="userSpaceOnUse" width="7.8" height="7.8" patternTransform="rotate(-45)"><rect width="7.8" height="7.8" fill="#fff"/><rect x="0" y="0" width="0.8" height="7.8" fill="#d2d2d2"/></pattern></defs><rect x="1018" y="100" width="894" height="959" fill="#fff"/><rect x="1022" y="134" width="1000" height="1000" fill="none" stroke="#de6f96" stroke-width="2.2"/><text x="1167.0" y="147.5" font-size="14.7" font-weight="bold" textLength="607.0" lengthAdjust="spacingAndGlyphs">PERSONALLY IDENTIFIABLE INFORMATION - WITHHOLD UNDER 43 EHU 5.923</text><rect x="1024" y="157.70" width="888.00" height="3" fill="#000"/><rect x="1023.50" y="157" width="1.8" height="902.00" fill="#000"/><text x="1033.0" y="175.0" font-size="10.5" font-weight="bold" textLength="81.0" lengthAdjust="spacingAndGlyphs">ABC FORM 123</text><text x="1033.0" y="185.0" font-size="9.5" fill="#333" textLength="41.0" lengthAdjust="spacingAndGlyphs">(11-2019)</text><text x="1034.0" y="197.0" font-size="9.5" fill="#333" textLength="90.0" lengthAdjust="spacingAndGlyphs">10 EHU 55.31, 55.33,</text><text x="1034.0" y="208.8" font-size="9.5" fill="#333" textLength="84.0" lengthAdjust="spacingAndGlyphs">55.35, 55.47, 55.53,</text><text x="1034.0" y="220.4" font-size="9.5" fill="#333" textLength="45.0" lengthAdjust="spacingAndGlyphs">and 55.57.</text><path d="M1143.5 217.6 L1152.6 202 L1161.5 217.6Z" fill="#606060"/><path d="M1158.9 190.8 L1165.3 200.9 L1171.4 190.8 L1186.9 217.6 L1179.6 217.6 L1170.7 201.6 L1167.9 205.8 L1174.2 217.6 L1166.9 217.6 L1155.4 196.4 Z" fill="#000"/><text x="1142.0" y="225.4" font-size="6" fill="#444" textLength="45.0" lengthAdjust="spacingAndGlyphs">ABC COMPANY</text><text x="1232.0" y="188.0" font-size="11" font-weight="bold" textLength="204.0" lengthAdjust="spacingAndGlyphs">APPRECIATIVE BOVINE COMMISSION</text><text x="1221.0" y="217.7" font-size="18.5" font-weight="bold" textLength="229.0" lengthAdjust="spacingAndGlyphs">APPLICATION FOR COW</text><text x="1221.0" y="241.0" font-size="18.5" font-weight="bold" textLength="228.0" lengthAdjust="spacingAndGlyphs">OWNERSHIP - LICENSEE</text><rect x="1468.75" y="158" width="2.5" height="108.00" fill="#000"/><rect x="1799.75" y="158" width="2.5" height="108.00" fill="#000"/><text x="1477.0" y="170.6" font-size="9.5" font-weight="bold" textLength="168.0" lengthAdjust="spacingAndGlyphs">APPROVED BY OMB:  NO. 3150-0090</text><text x="1697.0" y="170.7" font-size="9.5" font-weight="bold" textLength="97.0" lengthAdjust="spacingAndGlyphs">EXPIRES:  07/31/2022</text><text x="1476.0" y="187.5" font-size="8" fill="#1a1a1a" textLength="319.0" lengthAdjust="spacingAndGlyphs">Estimated  burden  per  response  to  comply  with  this  mandatory  collection  request:  2.56  hours.</text><text x="1476.0" y="197.5" font-size="8" fill="#1a1a1a" textLength="319.0" lengthAdjust="spacingAndGlyphs">NCLSB requires this information to ensure that applicants/licensees meet all the requirements for taking</text><text x="1476.0" y="207.5" font-size="8" fill="#1a1a1a" textLength="319.0" lengthAdjust="spacingAndGlyphs">ownership and sole possession of one or more cows. Send comments regarding burden estimate to the</text><text x="1476.0" y="217.5" font-size="8" fill="#1a1a1a" textLength="319.0" lengthAdjust="spacingAndGlyphs">Information  Services  Branch  (T-6  A10M),  U.S.  National  Cow  Licensing  Board,  Washington,  DC</text><text x="1476.0" y="227.5" font-size="8" fill="#1a1a1a" textLength="319.0" lengthAdjust="spacingAndGlyphs">12345-0001,  or  by  e-mail  to cows@whitehouse.gov and  to  the  Desk  Officer, Office  of  Cows  and</text><text x="1476.0" y="237.5" font-size="8" fill="#1a1a1a" textLength="319.0" lengthAdjust="spacingAndGlyphs">Bovine  Affairs,  MOOO-12345,  (1234-1234),  Office  of  Livestock,  Grasses,  and  Dirt,  Washington,  DC</text><text x="1476.0" y="247.5" font-size="8" fill="#1a1a1a" textLength="21.0" lengthAdjust="spacingAndGlyphs">12345.</text><text x="1811.0" y="175.6" font-size="12.5" fill="#222" textLength="91.0" lengthAdjust="spacingAndGlyphs">DATE RECIEVED</text><text x="1806.0" y="187.8" font-size="8.5" font-style="italic" fill="#333" textLength="72.5" lengthAdjust="spacingAndGlyphs">(To be completed by</text><text x="1806.0" y="197.6" font-size="8.5" font-style="italic" fill="#333" textLength="83.0" lengthAdjust="spacingAndGlyphs">National Cow Licensing</text><text x="1806.0" y="207.3" font-size="8.5" font-style="italic" fill="#333" textLength="60.0" lengthAdjust="spacingAndGlyphs">Board (NCLSB) )</text><rect x="1024" y="265.45" width="888.00" height="2.5" fill="#000"/><rect x="1181.55" y="266" width="1.5" height="65.00" fill="#4a4a4a"/><rect x="1325.05" y="266" width="1.5" height="65.00" fill="#4a4a4a"/><rect x="1411.25" y="266" width="1.5" height="65.00" fill="#4a4a4a"/><rect x="1469.25" y="266" width="1.5" height="65.00" fill="#4a4a4a"/><rect x="1613.25" y="266" width="1.5" height="65.00" fill="#4a4a4a"/><text x="1028.5" y="280.0" font-size="9.5" font-weight="bold" textLength="61.9" lengthAdjust="spacingAndGlyphs">1.  Last Name</text><text x="1186.8" y="280.0" font-size="9.5" font-weight="bold" textLength="62.2" lengthAdjust="spacingAndGlyphs">2.  First Name</text><text x="1330.6" y="280.0" font-size="9.5" font-weight="bold" textLength="71.1" lengthAdjust="spacingAndGlyphs">3.  Middle Initial</text><text x="1417.0" y="279.0" font-size="9.5" font-weight="bold" textLength="26.0" lengthAdjust="spacingAndGlyphs">Suffix</text><text x="1474.4" y="280.0" font-size="9.5" font-weight="bold" textLength="61.6" lengthAdjust="spacingAndGlyphs">4.  Birth Date:</text><text x="1542.5" y="280.0" font-size="9.5" fill="#222" textLength="66.9" lengthAdjust="spacingAndGlyphs">(MM/DD/YYYY)</text><text x="1618.0" y="280.0" font-size="9.5" font-weight="bold" textLength="83.0" lengthAdjust="spacingAndGlyphs">5.  E-mail Address</text><text x="1030.4" y="314.5" font-size="18" font-family="Liberation Mono" fill="#5e5e5e" textLength="90.1" lengthAdjust="spacingAndGlyphs">Bavridge</text><text x="1188.5" y="314.0" font-size="18" font-family="Liberation Mono" fill="#5e5e5e" textLength="44.2" lengthAdjust="spacingAndGlyphs">Doug</text><text x="1358.8" y="314.0" font-size="18" font-family="Liberation Mono" fill="#5e5e5e" textLength="19.0" lengthAdjust="spacingAndGlyphs">Y.</text><text x="1497.0" y="314.7" font-size="18" font-family="Liberation Mono" fill="#5e5e5e" textLength="90.0" lengthAdjust="spacingAndGlyphs">12/14/86</text><text x="1638.6" y="314.7" font-size="18" font-family="Liberation Mono" fill="#5e5e5e" textLength="253.0" lengthAdjust="spacingAndGlyphs">bavridge12@example.com</text><rect x="1025" y="330.95" width="887.00" height="1.5" fill="#4a4a4a"/><rect x="1196.25" y="331" width="1.5" height="65.00" fill="#4a4a4a"/><rect x="1411.25" y="331" width="1.5" height="65.00" fill="#4a4a4a"/><rect x="1613.25" y="331" width="1.5" height="65.00" fill="#4a4a4a"/><rect x="1757.25" y="331" width="1.5" height="65.00" fill="#4a4a4a"/><text x="1028.5" y="344.0" font-size="9.5" font-weight="bold" textLength="147.2" lengthAdjust="spacingAndGlyphs">6. Address Line 1 (Street Address)</text><text x="1201.0" y="344.0" font-size="9.5" font-weight="bold" textLength="170.0" lengthAdjust="spacingAndGlyphs">7.  Address Line 2 (Apt./Unit Number)</text><text x="1416.7" y="344.0" font-size="9.5" font-weight="bold" textLength="31.3" lengthAdjust="spacingAndGlyphs">8.  City</text><text x="1618.0" y="344.4" font-size="9.5" font-weight="bold" textLength="37.0" lengthAdjust="spacingAndGlyphs">9.  State</text><text x="1762.6" y="344.4" font-size="9.5" font-weight="bold" textLength="59.0" lengthAdjust="spacingAndGlyphs">10.  Zip Code</text><text x="1031.0" y="377.8" font-size="17" font-family="Liberation Mono" fill="#5e5e5e" textLength="152.0" lengthAdjust="spacingAndGlyphs">814 NW Dawn Lane</text><rect x="1416.3" y="365" width="105.5" height="15.6" fill="#a2e6a0" stroke="#88c086" stroke-width="0.9"/><text x="1417.0" y="378.7" font-size="17" font-family="Liberation Mono" fill="#1f6a1f" textLength="104.0" lengthAdjust="spacingAndGlyphs">Ann Arbor</text><text x="1620.0" y="378.0" font-size="17" font-family="Liberation Mono" fill="#5e5e5e" textLength="22.0" lengthAdjust="spacingAndGlyphs">MA</text><text x="1809.0" y="378.0" font-size="17" font-family="Liberation Mono" fill="#5e5e5e" textLength="56.0" lengthAdjust="spacingAndGlyphs">99999</text><rect x="1024" y="395.45" width="888.00" height="2.5" fill="#000"/><rect x="1025.2" y="397.8" width="887" height="19.80000000000001" fill="#c1c1c1"/><text x="1029.4" y="410.2" font-size="11" font-weight="bold" textLength="261.9" lengthAdjust="spacingAndGlyphs">11.  Type of Application (Check applicable boxes)</text><text x="1367.4" y="410.3" font-size="11" fill="#222" textLength="170.6" lengthAdjust="spacingAndGlyphs">12. Qualifications and Permissions</text><rect x="1025" y="417.45" width="887.00" height="1.5" fill="#4a4a4a"/><rect x="1360.75" y="396" width="2.5" height="136.00" fill="#000"/><rect x="1181.25" y="417" width="1.5" height="115.00" fill="#4a4a4a"/><rect x="1183" y="439" width="28" height="92" fill="url(#hat)"/><rect x="1210.25" y="439" width="1.5" height="93.00" fill="#4a4a4a"/><rect x="1026" y="511" width="156" height="20" fill="url(#hat)"/><rect x="1025" y="438.95" width="337.00" height="1.5" fill="#4a4a4a"/><rect x="1025" y="459.95" width="157.00" height="1.5" fill="#4a4a4a"/><rect x="1211" y="459.95" width="151.00" height="1.5" fill="#4a4a4a"/><rect x="1025" y="481.95" width="157.00" height="1.5" fill="#4a4a4a"/><rect x="1211" y="481.95" width="151.00" height="1.5" fill="#4a4a4a"/><rect x="1211" y="503.95" width="151.00" height="1.5" fill="#4a4a4a"/><rect x="1025" y="510.95" width="157.00" height="1.5" fill="#4a4a4a"/><rect x="1028.6" y="421.1" width="15.8" height="15.3" fill="#fff" stroke="#6e6e6e" stroke-width="1.5" rx="1"/><rect x="1028.6" y="442.1" width="15.8" height="15.3" fill="#fff" stroke="#6e6e6e" stroke-width="1.5" rx="1"/><rect x="1028.6" y="463.6" width="15.8" height="15.8" fill="#fff" stroke="#6e6e6e" stroke-width="1.5" rx="1"/><rect x="1028.6" y="488.9" width="15.8" height="15.5" fill="#fff" stroke="#6e6e6e" stroke-width="1.5" rx="1"/><text x="1055.0" y="431.6" font-size="9.5" font-weight="bold" textLength="37.6" lengthAdjust="spacingAndGlyphs">A.  NEW</text><text x="1055.0" y="452.9" font-size="9.5" font-weight="bold" textLength="63.5" lengthAdjust="spacingAndGlyphs">B.  RENEWAL</text><text x="1055.0" y="474.5" font-size="9.5" font-weight="bold" textLength="62.6" lengthAdjust="spacingAndGlyphs">C.  UPGRADE</text><text x="1055.0" y="494.3" font-size="9.5" font-weight="bold" textLength="75.5" lengthAdjust="spacingAndGlyphs">D.   MULTI-COW</text><text x="1136.0" y="494.3" font-size="8.5" fill="#555" textLength="29.0" lengthAdjust="spacingAndGlyphs">(amend</text><text x="1055.7" y="503.7" font-size="8.5" fill="#555" textLength="95.7" lengthAdjust="spacingAndGlyphs">to include additional cow)</text><rect x="1187.6" y="421.1" width="14.8" height="15.3" fill="#fff" stroke="#6e6e6e" stroke-width="1.5" rx="1"/><rect x="1191.0" y="424.8" width="8" height="8" fill="#000"/><text x="1213.7" y="431.6" font-size="9.5" font-weight="bold" textLength="92.1" lengthAdjust="spacingAndGlyphs">E.  REAPPLICATION</text><rect x="1215.6" y="441.8" width="15.8" height="15.4" fill="#fff" stroke="#6e6e6e" stroke-width="1.5" rx="1"/><rect x="1219.5" y="445.5" width="8" height="8" fill="#000"/><rect x="1215.6" y="464.0" width="15.8" height="15.4" fill="#fff" stroke="#6e6e6e" stroke-width="1.5" rx="1"/><rect x="1215.6" y="485.2" width="15.8" height="15.2" fill="#fff" stroke="#6e6e6e" stroke-width="1.5" rx="1"/><rect x="1215.6" y="510.6" width="15.8" height="15.4" fill="#fff" stroke="#6e6e6e" stroke-width="1.5" rx="1"/><text x="1242.4" y="452.9" font-size="9.5" font-weight="bold" textLength="79.4" lengthAdjust="spacingAndGlyphs">1 - FIRST DENIAL</text><text x="1242.4" y="474.5" font-size="9.5" font-weight="bold" textLength="92.4" lengthAdjust="spacingAndGlyphs">2 - SECOND DENIAL</text><text x="1242.4" y="495.7" font-size="9.5" font-weight="bold" textLength="81.3" lengthAdjust="spacingAndGlyphs">3 - THIRD DENIAL</text><text x="1242.4" y="520.7" font-size="9.5" font-weight="bold" textLength="80.4" lengthAdjust="spacingAndGlyphs">4 - WITHDRAWAL</text><rect x="1490.65" y="417" width="1.5" height="65.00" fill="#4a4a4a"/><rect x="1699.25" y="417" width="1.5" height="22.00" fill="#4a4a4a"/><rect x="1705.85" y="439" width="1.5" height="93.00" fill="#4a4a4a"/><rect x="1376" y="438.95" width="536.00" height="1.5" fill="#4a4a4a"/><rect x="1375.25" y="439" width="1.5" height="43.00" fill="#4a4a4a"/><rect x="1505.25" y="439" width="1.5" height="43.00" fill="#4a4a4a"/><rect x="1613.25" y="439" width="1.5" height="43.00" fill="#4a4a4a"/><rect x="1813.85" y="439" width="1.5" height="65.00" fill="#4a4a4a"/><rect x="1376" y="459.95" width="115.40" height="1.5" fill="#4a4a4a"/><rect x="1506" y="459.95" width="406.00" height="1.5" fill="#4a4a4a"/><rect x="1362" y="481.95" width="550.00" height="1.5" fill="#4a4a4a"/><rect x="1362" y="503.95" width="550.00" height="1.5" fill="#4a4a4a"/><rect x="1366.6" y="421.1" width="15.4" height="15.3" fill="#fff" stroke="#6e6e6e" stroke-width="1.5" rx="1"/><text x="1394.0" y="431.6" font-size="9.5" font-weight="bold" textLength="64.5" lengthAdjust="spacingAndGlyphs">a.  DEFERRAL</text><rect x="1496.6" y="421.1" width="14.8" height="15.3" fill="#fff" stroke="#6e6e6e" stroke-width="1.5" rx="1"/><rect x="1500.0" y="424.8" width="8" height="8" fill="#000"/><text x="1520.0" y="431.6" font-size="9.5" font-weight="bold" textLength="60.0" lengthAdjust="spacingAndGlyphs">b.  EXCUSAL</text><rect x="1704.6" y="421.1" width="15.8" height="15.3" fill="#fff" stroke="#6e6e6e" stroke-width="1.5" rx="1"/><text x="1731.5" y="431.6" font-size="9.5" font-weight="bold" textLength="51.2" lengthAdjust="spacingAndGlyphs">c.  WAIVER</text><rect x="1380.6" y="442.1" width="15.8" height="15.3" fill="#fff" stroke="#6e6e6e" stroke-width="1.5" rx="1"/><text x="1408.0" y="452.9" font-size="9.5" font-weight="bold" textLength="69.0" lengthAdjust="spacingAndGlyphs">1 - ELIGIBILITY</text><rect x="1380.6" y="463.6" width="15.8" height="15.8" fill="#fff" stroke="#6e6e6e" stroke-width="1.5" rx="1"/><text x="1408.0" y="474.5" font-size="9.5" font-weight="bold" textLength="75.0" lengthAdjust="spacingAndGlyphs">2 - EXPERIENCE</text><rect x="1510.6" y="442.1" width="14.8" height="15.3" fill="#fff" stroke="#6e6e6e" stroke-width="1.5" rx="1"/><rect x="1514.0" y="445.8" width="8" height="8" fill="#000"/><text x="1537.5" y="452.9" font-size="9.5" font-weight="bold" textLength="56.8" lengthAdjust="spacingAndGlyphs">1 - WRITTEN</text><rect x="1510.6" y="463.6" width="14.8" height="15.8" fill="#fff" stroke="#6e6e6e" stroke-width="1.5" rx="1"/><text x="1537.5" y="474.5" font-size="9.5" font-weight="bold" textLength="70.5" lengthAdjust="spacingAndGlyphs">2 - OPERATING</text><text x="1618.0" y="452.9" font-size="9.5" font-weight="bold" textLength="47.8" lengthAdjust="spacingAndGlyphs">(Category)</text><text x="1672.7" y="453.5" font-size="7" fill="#999" textLength="9.3" lengthAdjust="spacingAndGlyphs">X5</text><text x="1618.0" y="474.5" font-size="9.5" font-weight="bold" textLength="47.8" lengthAdjust="spacingAndGlyphs">(Category)</text><rect x="1711.6" y="442.1" width="15.8" height="15.3" fill="#fff" stroke="#6e6e6e" stroke-width="1.5" rx="1"/><text x="1739.0" y="452.9" font-size="9.5" font-weight="bold" textLength="56.5" lengthAdjust="spacingAndGlyphs">1 - WRITTEN</text><text x="1819.6" y="452.9" font-size="9.5" font-weight="bold" textLength="47.4" lengthAdjust="spacingAndGlyphs">(Category)</text><rect x="1711.6" y="463.6" width="15.8" height="15.8" fill="#fff" stroke="#6e6e6e" stroke-width="1.5" rx="1"/><text x="1739.0" y="474.5" font-size="9.5" font-weight="bold" textLength="70.0" lengthAdjust="spacingAndGlyphs">2 - OPERATING</text><text x="1819.6" y="474.5" font-size="9.5" font-weight="bold" textLength="47.4" lengthAdjust="spacingAndGlyphs">(Category)</text><rect x="1366.6" y="485.2" width="15.4" height="15.2" fill="#fff" stroke="#6e6e6e" stroke-width="1.5" rx="1"/><rect x="1370.3" y="488.8" width="8" height="8" fill="#000"/><text x="1394.0" y="495.7" font-size="9.5" font-weight="bold" textLength="104.2" lengthAdjust="spacingAndGlyphs">d.  DATE PASSED BCE</text><rect x="1505" y="483" width="201" height="20.5" fill="url(#hat)"/><rect x="1815.5" y="483" width="96.5" height="20.5" fill="url(#hat)"/><rect x="1711.6" y="485.2" width="15.8" height="15.2" fill="#fff" stroke="#6e6e6e" stroke-width="1.5" rx="1"/><text x="1739.0" y="495.7" font-size="9.5" font-weight="bold" textLength="56.5" lengthAdjust="spacingAndGlyphs">3 - MEDICAL</text><rect x="1600" y="505" width="106" height="26" fill="url(#hat)"/><text x="1366.0" y="520.0" font-size="8.5" fill="#333" textLength="22.8" lengthAdjust="spacingAndGlyphs">(MM)</text><text x="1394.0" y="523.5" font-size="15" font-family="Liberation Mono" fill="#5e5e5e" textLength="53.6" lengthAdjust="spacingAndGlyphs">August</text><rect x="1534.25" y="504" width="1.5" height="28.00" fill="#4a4a4a"/><rect x="1536" y="505" width="64" height="26" fill="#fff"/><text x="1542.0" y="520.0" font-size="8.5" fill="#333" textLength="16.2" lengthAdjust="spacingAndGlyphs">(YY)</text><text x="1576.0" y="523.5" font-size="16" font-family="Liberation Mono" fill="#5e5e5e" textLength="18.0" lengthAdjust="spacingAndGlyphs">22</text><rect x="1711.6" y="510.6" width="15.8" height="15.4" fill="#fff" stroke="#6e6e6e" stroke-width="1.5" rx="1"/><text x="1739.0" y="520.7" font-size="9.5" font-weight="bold" textLength="46.7" lengthAdjust="spacingAndGlyphs">4 - OTHER</text><rect x="1024" y="531.30" width="888.00" height="2.8" fill="#000"/><text x="1028.5" y="553.7" font-size="11" font-weight="bold" textLength="154.3" lengthAdjust="spacingAndGlyphs">13.  Type of Cow Applied for:</text><rect x="1258.6" y="542.6" width="15.8" height="15.8" fill="#fff" stroke="#6e6e6e" stroke-width="1.5" rx="1"/><text x="1286.0" y="553.7" font-size="11" font-weight="bold" textLength="100.0" lengthAdjust="spacingAndGlyphs">DOMESTIC (Home)</text><rect x="1452.6" y="542.6" width="15.8" height="15.8" fill="#fff" stroke="#6e6e6e" stroke-width="1.5" rx="1"/><text x="1480.0" y="553.7" font-size="11" font-weight="bold" textLength="102.3" lengthAdjust="spacingAndGlyphs">FARM (Agriculture)</text><rect x="1711.6" y="542.6" width="15.8" height="15.8" fill="#fff" stroke="#6e6e6e" stroke-width="1.5" rx="1"/><rect x="1715.5" y="546.5" width="8" height="8" fill="#000"/><text x="1739.0" y="553.7" font-size="11" font-weight="bold" textLength="82.0" lengthAdjust="spacingAndGlyphs">SHOW (Beauty)</text><rect x="1024" y="567.30" width="888.00" height="2.8" fill="#000"/><rect x="1025.2" y="570.1" width="887" height="20.5" fill="#c1c1c1"/><text x="1369.7" y="582.6" font-size="11" font-weight="bold" textLength="174.7" lengthAdjust="spacingAndGlyphs">14. Bovine Licensing Information</text><rect x="1025" y="590.45" width="887.00" height="1.5" fill="#4a4a4a"/><rect x="1253.25" y="590" width="1.5" height="122.00" fill="#4a4a4a"/><rect x="1325.25" y="590" width="1.5" height="122.00" fill="#4a4a4a"/><rect x="1490.85" y="590" width="1.5" height="122.00" fill="#4a4a4a"/><rect x="1606.05" y="590" width="1.5" height="64.00" fill="#4a4a4a"/><rect x="1670.75" y="604" width="1.5" height="50.00" fill="#4a4a4a"/><text x="1072.0" y="602.3" font-size="9.5" font-weight="bold" textLength="70.5" lengthAdjust="spacingAndGlyphs">Docket Number</text><text x="1028.0" y="632.4" font-size="15" font-weight="bold" textLength="36.3" lengthAdjust="spacingAndGlyphs">055 -</text><text x="1124.5" y="635.5" font-size="18" font-family="Liberation Mono" fill="#5e5e5e" textLength="67.5" lengthAdjust="spacingAndGlyphs">143365</text><rect x="1258.6" y="594.1" width="15.8" height="14.7" fill="#fff" stroke="#6e6e6e" stroke-width="1.5" rx="1"/><rect x="1258.6" y="615.4" width="15.8" height="14.7" fill="#fff" stroke="#6e6e6e" stroke-width="1.5" rx="1"/><rect x="1262.5" y="618.8" width="8" height="8" fill="#000"/><rect x="1258.6" y="637.2" width="15.8" height="14.9" fill="#fff" stroke="#6e6e6e" stroke-width="1.5" rx="1"/><rect x="1254" y="611.70" width="72.00" height="1.5" fill="#4a4a4a"/><rect x="1254" y="632.95" width="72.00" height="1.5" fill="#4a4a4a"/><text x="1286.0" y="604.0" font-size="11.5" font-weight="bold" textLength="22.4" lengthAdjust="spacingAndGlyphs">BAF</text><text x="1286.0" y="626.0" font-size="11.5" font-weight="bold" textLength="22.4" lengthAdjust="spacingAndGlyphs">FCH</text><text x="1286.0" y="647.0" font-size="11.5" font-weight="bold" textLength="22.4" lengthAdjust="spacingAndGlyphs">TBS</text><text x="1330.6" y="602.3" font-size="9.5" font-weight="bold" textLength="86.4" lengthAdjust="spacingAndGlyphs">License Number(s)</text><text x="1335.0" y="636.6" font-size="18" font-family="Liberation Mono" fill="#5e5e5e" textLength="66.7" lengthAdjust="spacingAndGlyphs">088042</text><text x="1496.5" y="602.0" font-size="9.5" font-weight="bold" textLength="81.7" lengthAdjust="spacingAndGlyphs">Expiration Date(s)</text><text x="1510.0" y="636.7" font-size="18" font-family="Liberation Mono" fill="#5e5e5e" textLength="78.0" lengthAdjust="spacingAndGlyphs">12/2022</text><text x="1618.0" y="600.0" font-size="9.5" font-weight="bold" textLength="106.5" lengthAdjust="spacingAndGlyphs">Facility Docket Number</text><text x="1727.4" y="600.0" font-size="9.5" fill="#333" textLength="188.6" lengthAdjust="spacingAndGlyphs">(Separate multiple docket numbers by &quot;;&quot;)</text><rect x="1606.8" y="604.25" width="305.20" height="1.5" fill="#4a4a4a"/><rect x="1611.6" y="609.6" width="15.8" height="14.8" fill="#fff" stroke="#6e6e6e" stroke-width="1.5" rx="1"/><rect x="1615.5" y="613.0" width="8" height="8" fill="#000"/><text x="1637.0" y="621.0" font-size="13.5" font-weight="bold" textLength="25.6" lengthAdjust="spacingAndGlyphs">050</text><rect x="1606.8" y="628.95" width="64.70" height="1.5" fill="#4a4a4a"/><rect x="1611.6" y="634.2" width="15.8" height="15.2" fill="#fff" stroke="#6e6e6e" stroke-width="1.5" rx="1"/><rect x="1615.5" y="637.8" width="8" height="8" fill="#000"/><text x="1637.0" y="646.0" font-size="13.5" font-weight="bold" textLength="25.6" lengthAdjust="spacingAndGlyphs">052</text><text x="1749.0" y="623.5" font-size="18" font-family="Liberation Mono" fill="#5e5e5e" textLength="90.0" lengthAdjust="spacingAndGlyphs">38864616</text><text x="1749.0" y="647.5" font-size="18" font-family="Liberation Mono" fill="#5e5e5e" textLength="90.0" lengthAdjust="spacingAndGlyphs">85625585</text><rect x="1024" y="653.70" width="888.00" height="2.8" fill="#000"/><text x="1028.5" y="667.4" font-size="9.5" font-weight="bold" textLength="146.5" lengthAdjust="spacingAndGlyphs">15.  Name of Applicant&#x27;s Facility</text><text x="1030.4" y="698.0" font-size="18" font-family="Liberation Mono" fill="#5e5e5e" textLength="123.2" lengthAdjust="spacingAndGlyphs">Bryan College</text><rect x="1258.6" y="672.6" width="15.8" height="14.8" fill="#fff" stroke="#6e6e6e" stroke-width="1.5" rx="1"/><text x="1289.0" y="685.5" font-size="15.5" font-weight="bold" textLength="26.5" lengthAdjust="spacingAndGlyphs">050</text><rect x="1254" y="691.55" width="72.00" height="1.5" fill="#4a4a4a"/><rect x="1258.6" y="694.1" width="15.8" height="14.3" fill="#fff" stroke="#6e6e6e" stroke-width="1.5" rx="1"/><rect x="1262.5" y="697.2" width="8" height="8" fill="#000"/><text x="1289.0" y="707.3" font-size="15.5" font-weight="bold" textLength="26.5" lengthAdjust="spacingAndGlyphs">052</text><text x="1330.6" y="667.4" font-size="9.5" font-weight="bold" textLength="125.2" lengthAdjust="spacingAndGlyphs">16.  Facility Docket Number</text><text x="1332.5" y="699.4" font-size="18" font-family="Liberation Mono" fill="#5e5e5e" textLength="89.5" lengthAdjust="spacingAndGlyphs">08001343</text><text x="1496.5" y="668.0" font-size="9.5" font-weight="bold" textLength="282.0" lengthAdjust="spacingAndGlyphs">17.  Additional Facility Docket Number(s) (Multi-unit Licenses)</text><rect x="1024" y="711.80" width="888.00" height="2.8" fill="#000"/><rect x="1025.2" y="714.6" width="887" height="20" fill="#c1c1c1"/><text x="1263.0" y="726.0" font-size="11" font-weight="bold" textLength="450.0" lengthAdjust="spacingAndGlyphs">18.  Current Familiarity with Cows and Cow-Like Lifeforms (Llamas, Dogs, Ostriches)</text><rect x="1025" y="734.25" width="887.00" height="1.5" fill="#4a4a4a"/><rect x="1310.45" y="734" width="1.5" height="86.00" fill="#4a4a4a"/><rect x="1613.25" y="734" width="1.5" height="86.00" fill="#4a4a4a"/><rect x="1025" y="756.15" width="887.00" height="1.5" fill="#4a4a4a"/><rect x="1025" y="777.45" width="887.00" height="1.5" fill="#4a4a4a"/><rect x="1025" y="799.25" width="887.00" height="1.5" fill="#4a4a4a"/><rect x="1615" y="800.3" width="297" height="18.700000000000045" fill="url(#hat)"/><rect x="1029.1" y="737.6" width="14.9" height="15.2" fill="#fff" stroke="#6e6e6e" stroke-width="1.5" rx="1"/><text x="1055.8" y="748.0" font-size="11.5" font-weight="bold" textLength="145.9" lengthAdjust="spacingAndGlyphs">A.  Know what a mammal is</text><rect x="1316.6" y="737.6" width="15.3" height="15.2" fill="#fff" stroke="#6e6e6e" stroke-width="1.5" rx="1"/><text x="1343.0" y="748.0" font-size="11.5" font-weight="bold" textLength="221.3" lengthAdjust="spacingAndGlyphs">E. I Owned an Ostrich Once, and I Liked It</text><rect x="1618.6" y="737.6" width="15.4" height="15.2" fill="#fff" stroke="#6e6e6e" stroke-width="1.5" rx="1"/><text x="1648.0" y="748.0" font-size="11.5" font-weight="bold" textLength="225.0" lengthAdjust="spacingAndGlyphs">I.  I&#x27;ve Seen A Cow One(1) to Five(5) Times</text><rect x="1029.1" y="759.2" width="14.9" height="14.7" fill="#fff" stroke="#6e6e6e" stroke-width="1.5" rx="1"/><text x="1055.8" y="770.4" font-size="11.5" font-weight="bold" textLength="226.5" lengthAdjust="spacingAndGlyphs">B.  Can Distinguish Biped from Quadruped</text><rect x="1316.6" y="759.2" width="15.3" height="14.7" fill="#fff" stroke="#6e6e6e" stroke-width="1.5" rx="1"/><text x="1343.0" y="770.4" font-size="11.5" font-weight="bold" textLength="226.0" lengthAdjust="spacingAndGlyphs">F.  I Owned an Ostrich Once, and I Hated It</text><rect x="1618.6" y="759.2" width="15.4" height="14.7" fill="#fff" stroke="#6e6e6e" stroke-width="1.5" rx="1"/><rect x="1622.3" y="762.5" width="8" height="8" fill="#000"/><text x="1648.0" y="770.4" font-size="11.5" font-weight="bold" textLength="265.0" lengthAdjust="spacingAndGlyphs">J.  I&#x27;ve Heard A Cow Speak In Its Secret Language</text><rect x="1029.1" y="781.0" width="14.9" height="14.9" fill="#fff" stroke="#6e6e6e" stroke-width="1.5" rx="1"/><text x="1055.8" y="791.8" font-size="11.5" font-weight="bold" textLength="144.0" lengthAdjust="spacingAndGlyphs">C. Basic Spot Identification</text><rect x="1316.6" y="781.0" width="15.3" height="14.9" fill="#fff" stroke="#6e6e6e" stroke-width="1.5" rx="1"/><text x="1343.0" y="791.8" font-size="11.5" font-weight="bold" textLength="227.3" lengthAdjust="spacingAndGlyphs">G.  I&#x27;ve Learned The Truth About Ostriches</text><rect x="1618.6" y="781.0" width="15.4" height="14.9" fill="#fff" stroke="#6e6e6e" stroke-width="1.5" rx="1"/><text x="1648.0" y="791.8" font-size="11.5" font-weight="bold" textLength="172.4" lengthAdjust="spacingAndGlyphs">K.  Other (Must Be Cow-Related)</text><rect x="1029.1" y="802.6" width="14.9" height="15.1" fill="#fff" stroke="#6e6e6e" stroke-width="1.5" rx="1"/><rect x="1032.5" y="806.1" width="8" height="8" fill="#000"/><text x="1055.8" y="813.5" font-size="11.5" font-weight="bold" textLength="167.7" lengthAdjust="spacingAndGlyphs">D. Advanced Spot Identification</text><rect x="1316.6" y="802.6" width="15.3" height="15.1" fill="#fff" stroke="#6e6e6e" stroke-width="1.5" rx="1"/><rect x="1320.2" y="806.1" width="8" height="8" fill="#000"/><text x="1343.0" y="813.5" font-size="11.5" font-weight="bold" textLength="172.9" lengthAdjust="spacingAndGlyphs">H.  A Llama Is Just A Fancy Cow</text><rect x="1024" y="819.30" width="888.00" height="2.8" fill="#000"/><rect x="1025.2" y="822.1" width="887" height="21.0" fill="#c1c1c1"/><text x="1432.0" y="834.7" font-size="11" font-weight="bold" textLength="75.5" lengthAdjust="spacingAndGlyphs">19.  Education</text><rect x="1025" y="842.75" width="887.00" height="1.5" fill="#4a4a4a"/><rect x="1152.25" y="842" width="1.5" height="86.00" fill="#4a4a4a"/><rect x="1461.65" y="842" width="1.5" height="86.00" fill="#4a4a4a"/><rect x="1570.05" y="842" width="1.5" height="86.00" fill="#4a4a4a"/><rect x="1757.25" y="842" width="1.5" height="86.00" fill="#4a4a4a"/><rect x="1814.65" y="842" width="1.5" height="86.00" fill="#4a4a4a"/><rect x="1339.65" y="864" width="1.5" height="64.00" fill="#4a4a4a"/><rect x="1382.75" y="864" width="1.5" height="64.00" fill="#4a4a4a"/><rect x="1865.05" y="871" width="1.5" height="57.00" fill="#4a4a4a"/><rect x="1025" y="863.75" width="437.40" height="1.5" fill="#4a4a4a"/><rect x="1025" y="884.95" width="437.40" height="1.5" fill="#4a4a4a"/><rect x="1025" y="907.15" width="437.40" height="1.5" fill="#4a4a4a"/><rect x="1570.8" y="856.45" width="187.20" height="1.5" fill="#4a4a4a"/><rect x="1570.8" y="870.95" width="341.20" height="1.5" fill="#4a4a4a"/><rect x="1570.8" y="899.85" width="341.20" height="1.5" fill="#4a4a4a"/><text x="1054.0" y="855.5" font-size="10.5" font-weight="bold" textLength="69.0" lengthAdjust="spacingAndGlyphs">a.  High School</text><text x="1284.0" y="855.5" font-size="10.5" font-weight="bold" textLength="47.8" lengthAdjust="spacingAndGlyphs">b.  College</text><rect x="1029.1" y="867.6" width="14.9" height="14.6" fill="#fff" stroke="#6e6e6e" stroke-width="1.5" rx="1"/><rect x="1029.1" y="889.3" width="14.9" height="14.7" fill="#fff" stroke="#6e6e6e" stroke-width="1.5" rx="1"/><rect x="1032.5" y="892.7" width="8" height="8" fill="#000"/><rect x="1029.1" y="910.2" width="14.9" height="14.8" fill="#fff" stroke="#6e6e6e" stroke-width="1.5" rx="1"/><text x="1055.8" y="878.0" font-size="11.5" font-weight="bold" textLength="48.5" lengthAdjust="spacingAndGlyphs">Graduate</text><text x="1055.8" y="900.0" font-size="11.5" font-weight="bold" textLength="91.9" lengthAdjust="spacingAndGlyphs">GED Equivalency</text><text x="1055.8" y="920.7" font-size="11.5" font-weight="bold" textLength="14.4" lengthAdjust="spacingAndGlyphs">No</text><text x="1156.7" y="878.0" font-size="10" fill="#444" textLength="98.3" lengthAdjust="spacingAndGlyphs">Major Area(s) of Study</text><text x="1156.7" y="900.0" font-size="10" fill="#444" textLength="45.5" lengthAdjust="spacingAndGlyphs">Agriculture</text><text x="1214.8" y="900.0" font-size="9.5" font-family="Liberation Mono" fill="#888" textLength="78.6" lengthAdjust="spacingAndGlyphs">Farm Economics</text><text x="1156.7" y="920.0" font-size="8" fill="#555" textLength="23.5" lengthAdjust="spacingAndGlyphs">Other:</text><text x="1362.0" y="871.7" font-size="8" font-weight="bold" text-anchor="middle">Number</text><text x="1362.0" y="881.0" font-size="8" font-weight="bold" text-anchor="middle">of Years</text><text x="1423.0" y="871.7" font-size="8" font-weight="bold" text-anchor="middle">HIGHEST DEGREE</text><text x="1423.0" y="881.0" font-size="8" font-weight="bold" text-anchor="middle">(Use Codes)</text><text x="1362.0" y="900.4" font-size="9" font-family="Liberation Mono" fill="#777" text-anchor="middle">4</text><text x="1423.0" y="900.4" font-size="9" font-family="Liberation Mono" fill="#777" text-anchor="middle">3</text><text x="1487.6" y="853.6" font-size="9" font-weight="bold" textLength="57.5" lengthAdjust="spacingAndGlyphs">DEGREE CODES</text><text x="1464.3" y="863.0" font-size="8.5" fill="#333" textLength="104.1" lengthAdjust="spacingAndGlyphs">(&quot;Highest Degree&quot; obtained)</text><text x="1476.8" y="877.5" font-size="7" fill="#333">0 - None</text><text x="1476.8" y="885.5" font-size="7" fill="#333">1 - Certificate</text><text x="1476.8" y="893.5" font-size="7" fill="#333">2 - Associate</text><text x="1476.8" y="901.0" font-size="7" fill="#333">3 - Bachelor</text><text x="1476.8" y="908.6" font-size="7" fill="#333">4 - Master</text><text x="1476.8" y="916.7" font-size="7" fill="#333">5 - Doctoral</text><text x="1609.9" y="852.4" font-size="10.5" font-weight="bold" textLength="108.6" lengthAdjust="spacingAndGlyphs">c.  Vocational/Technical</text><text x="1629.8" y="866.8" font-size="10.5" fill="#333" textLength="71.9" lengthAdjust="spacingAndGlyphs">Type of Training</text><text x="1787.0" y="853.6" font-size="8.5" font-weight="bold" text-anchor="middle">Number of</text><text x="1787.0" y="863.0" font-size="8.5" font-weight="bold" text-anchor="middle">Months</text><text x="1819.7" y="858.8" font-size="10.5" font-weight="bold" textLength="91.6" lengthAdjust="spacingAndGlyphs">Certificate Received</text><text x="1606.8" y="889.5" font-size="9.5" font-family="Liberation Mono" fill="#888" textLength="114.6" lengthAdjust="spacingAndGlyphs">Cosmetology for Cows</text><text x="1786.6" y="889.5" font-size="9.5" font-family="Liberation Mono" fill="#777" text-anchor="middle">24</text><rect x="1820.3" y="878.1" width="15.6" height="15.2" fill="#fff" stroke="#6e6e6e" stroke-width="1.5" rx="1"/><rect x="1824.1" y="881.7" width="8" height="8" fill="#000"/><rect x="1870.2" y="878.1" width="15.5" height="15.2" fill="#fff" stroke="#6e6e6e" stroke-width="1.5" rx="1"/><text x="1844.4" y="888.3" font-size="10.5" fill="#333" textLength="15.6" lengthAdjust="spacingAndGlyphs">Yes</text><text x="1895.0" y="888.3" font-size="10.5" fill="#333" textLength="12.2" lengthAdjust="spacingAndGlyphs">No</text><rect x="1820.3" y="906.9" width="15.6" height="15.1" fill="#fff" stroke="#6e6e6e" stroke-width="1.5" rx="1"/><rect x="1870.2" y="906.9" width="15.5" height="15.1" fill="#fff" stroke="#6e6e6e" stroke-width="1.5" rx="1"/><text x="1844.4" y="917.1" font-size="10.5" fill="#333" textLength="15.6" lengthAdjust="spacingAndGlyphs">Yes</text><text x="1895.0" y="917.1" font-size="10.5" fill="#333" textLength="12.2" lengthAdjust="spacingAndGlyphs">No</text><rect x="1024" y="927.30" width="888.00" height="2.8" fill="#000"/><rect x="1025.2" y="930.1" width="887" height="20.5" fill="#c1c1c1"/><text x="1327.0" y="942.8" font-size="11" font-weight="bold" textLength="282.0" lengthAdjust="spacingAndGlyphs">20.  Cow Ownership Understanding and Qualification</text><rect x="1025" y="950.25" width="887.00" height="1.5" fill="#4a4a4a"/><rect x="1814.65" y="950" width="1.5" height="57.00" fill="#4a4a4a"/><rect x="1865.05" y="950" width="1.5" height="57.00" fill="#4a4a4a"/><rect x="1025" y="978.95" width="887.00" height="1.5" fill="#4a4a4a"/><text x="1028.5" y="968.8" font-size="11.5" font-weight="bold" textLength="655.5" lengthAdjust="spacingAndGlyphs">a.  Has the applicant completed the Cow Operating Training Program accredited by the National Bovine Accrediting Board?</text><text x="1028.5" y="997.3" font-size="11.5" font-weight="bold" textLength="447.1" lengthAdjust="spacingAndGlyphs">b.  Is a &quot;Steer Manipulation Controller&quot; used in the Cow Operator Training Program?</text><rect x="1820.3" y="956.6" width="15.6" height="15.8" fill="#fff" stroke="#6e6e6e" stroke-width="1.5" rx="1"/><rect x="1870.2" y="956.6" width="15.5" height="15.8" fill="#fff" stroke="#6e6e6e" stroke-width="1.5" rx="1"/><rect x="1873.9" y="960.5" width="8" height="8" fill="#000"/><text x="1845.0" y="968.2" font-size="10" fill="#444" textLength="15.0" lengthAdjust="spacingAndGlyphs">Yes</text><text x="1897.6" y="968.2" font-size="10" fill="#444" textLength="11.4" lengthAdjust="spacingAndGlyphs">No</text><rect x="1820.3" y="986.0" width="15.6" height="15.1" fill="#fff" stroke="#6e6e6e" stroke-width="1.5" rx="1"/><rect x="1870.2" y="986.0" width="15.5" height="15.1" fill="#fff" stroke="#6e6e6e" stroke-width="1.5" rx="1"/><rect x="1873.9" y="989.5" width="8" height="8" fill="#000"/><text x="1845.0" y="997.0" font-size="10" fill="#444" textLength="15.0" lengthAdjust="spacingAndGlyphs">Yes</text><text x="1897.6" y="997.0" font-size="10" fill="#444" textLength="11.4" lengthAdjust="spacingAndGlyphs">No</text><rect x="1024" y="1006.30" width="888.00" height="2.8" fill="#000"/><rect x="1025.2" y="1009.1" width="887" height="20.5" fill="#c1c1c1"/><text x="1323.0" y="1022.0" font-size="11" font-weight="bold" textLength="293.4" lengthAdjust="spacingAndGlyphs">21.  Training (Since Last Application - See Instructions)</text><rect x="1025" y="1029.25" width="887.00" height="1.5" fill="#4a4a4a"/><rect x="1238.85" y="1029" width="1.5" height="30.00" fill="#4a4a4a"/><rect x="1324.65" y="1029" width="1.5" height="30.00" fill="#4a4a4a"/><rect x="1396.95" y="1029" width="1.5" height="30.00" fill="#4a4a4a"/><rect x="1454.55" y="1029" width="1.5" height="30.00" fill="#4a4a4a"/><rect x="1699.55" y="1029" width="1.5" height="30.00" fill="#4a4a4a"/><rect x="1785.25" y="1029" width="1.5" height="30.00" fill="#4a4a4a"/><rect x="1857.85" y="1029" width="1.5" height="30.00" fill="#4a4a4a"/><rect x="1025" y="1050.55" width="887.00" height="1.5" fill="#4a4a4a"/><text x="1028.5" y="1043.5" font-size="12" font-weight="bold" textLength="73.0" lengthAdjust="spacingAndGlyphs">a.  Classroom</text><text x="1244.0" y="1043.3" font-size="9.5" font-weight="bold" textLength="77.0" lengthAdjust="spacingAndGlyphs">From (MM/YYYY)</text><text x="1330.0" y="1043.3" font-size="9.5" font-weight="bold" textLength="64.0" lengthAdjust="spacingAndGlyphs">To (MM/YYYY)</text><text x="1402.0" y="1043.3" font-size="9.5" font-weight="bold" textLength="49.0" lengthAdjust="spacingAndGlyphs">No. of Weeks</text><text x="1705.0" y="1043.3" font-size="9.5" font-weight="bold" textLength="76.0" lengthAdjust="spacingAndGlyphs">From (MM/YYYY)</text><text x="1791.0" y="1043.3" font-size="9.5" font-weight="bold" textLength="64.0" lengthAdjust="spacingAndGlyphs">To (MM/YYYY)</text><text x="1862.4" y="1043.3" font-size="9.5" font-weight="bold" textLength="53.6" lengthAdjust="spacingAndGlyphs">No. of Weeks</text><text x="1257.0" y="1069.0" font-size="16" font-family="Liberation Mono" fill="#666" textLength="52.0" lengthAdjust="spacingAndGlyphs">02/2022</text><text x="1339.0" y="1069.0" font-size="16" font-family="Liberation Mono" fill="#666" textLength="49.0" lengthAdjust="spacingAndGlyphs">03/2022</text><text x="1422.0" y="1069.0" font-size="16" font-family="Liberation Mono" fill="#666" textLength="10.0" lengthAdjust="spacingAndGlyphs">3</text><text x="1718.0" y="1069.0" font-size="16" font-family="Liberation Mono" fill="#666" textLength="52.0" lengthAdjust="spacingAndGlyphs">02/2022</text><text x="1800.0" y="1069.0" font-size="16" font-family="Liberation Mono" fill="#666" textLength="49.0" lengthAdjust="spacingAndGlyphs">03/2022</text><text x="1028.5" y="1066.0" font-size="11.5" font-weight="bold" textLength="151.5" lengthAdjust="spacingAndGlyphs">1.  Farm Hand Fundamentals</text><text x="1462.0" y="1066.0" font-size="11.5" font-weight="bold" textLength="178.0" lengthAdjust="spacingAndGlyphs">b.  Extra Person on Shift in Cow Room</text></svg>
<div class="a" style="left:1018px;top:1059px;width:900px;height:5px;background:#1f1f1f;"></div>
<div class="a" style="left:1052px;top:1059px;width:816px;height:5px;background:#17474b;border-radius:4px 4px 0 0;"></div>
<div class="a" style="left:1912px;top:100px;width:6px;height:964px;background:#1f1f1f;"></div>
<div class="a" style="left:1912px;top:100px;width:6px;height:724px;background:#17474b;border-radius:0 0 3px 3px;"></div>
</body></html>
